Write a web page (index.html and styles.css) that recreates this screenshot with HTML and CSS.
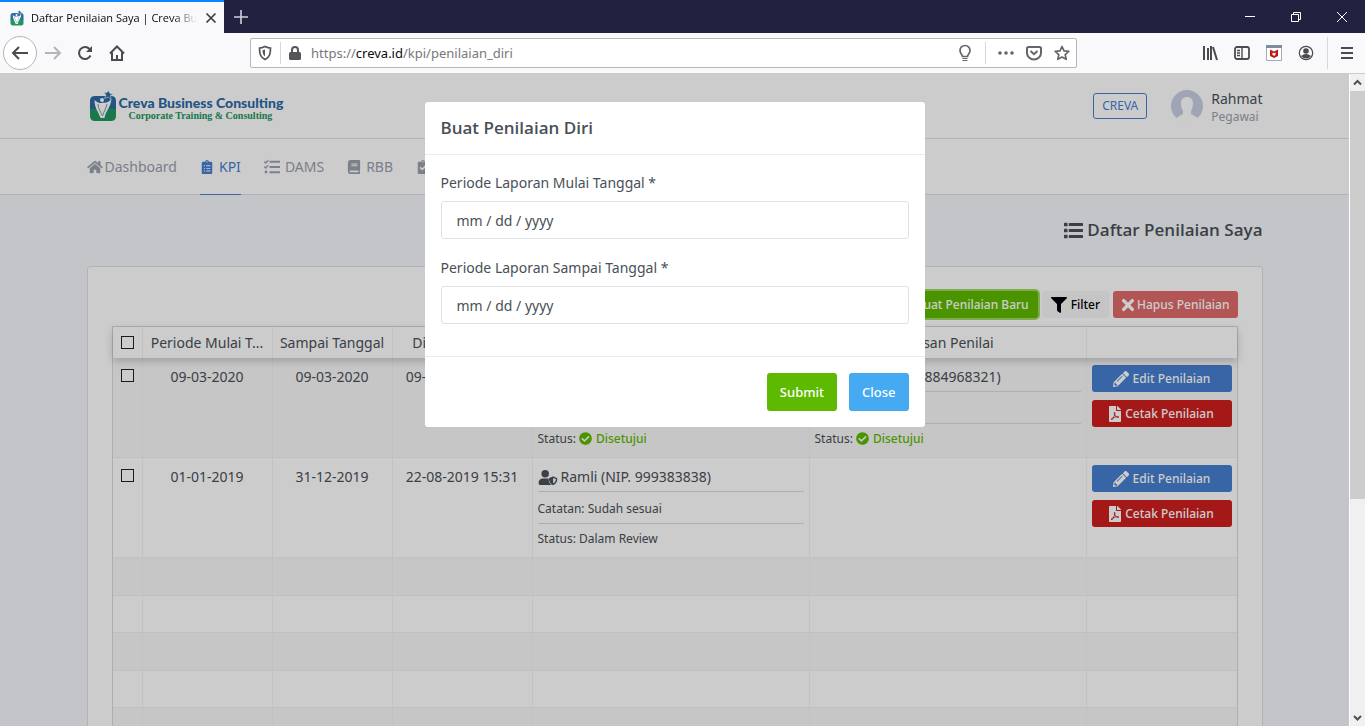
FILE: index.html
```html
<!DOCTYPE html>
<html lang="id">
<head>
<meta charset="utf-8">
<title>Daftar Penilaian Saya | Creva Business Consulting</title>
<link rel="stylesheet" href="styles.css">
</head>
<body>
<svg class="sprite" aria-hidden="true">
  <symbol id="home" viewBox="0 0 576 512"><path d="M280.37 148.26L96 300.11V464a16 16 0 0 0 16 16l112.06-.29a16 16 0 0 0 15.92-16V368a16 16 0 0 1 16-16h64a16 16 0 0 1 16 16v95.64a16 16 0 0 0 16 16.05L464 480a16 16 0 0 0 16-16V300L295.67 148.26a12.19 12.19 0 0 0-15.3 0zM571.6 251.47L488 182.56V44.05a12 12 0 0 0-12-12h-56a12 12 0 0 0-12 12v72.61L318.47 43a48 48 0 0 0-61 0L4.34 251.47a12 12 0 0 0-1.6 16.9l25.5 31A12 12 0 0 0 45.15 301l235.22-193.74a12.19 12.19 0 0 1 15.3 0L530.9 301a12 12 0 0 0 16.9-1.6l25.5-31a12 12 0 0 0-1.7-16.93z"/></symbol>
  <symbol id="clipboard-list" viewBox="0 0 384 512"><path d="M336 64h-80c0-35.3-28.7-64-64-64s-64 28.7-64 64H48C21.5 64 0 85.5 0 112v352c0 26.5 21.5 48 48 48h288c26.5 0 48-21.5 48-48V112c0-26.5-21.5-48-48-48zM96 424c-13.3 0-24-10.7-24-24s10.7-24 24-24 24 10.7 24 24-10.7 24-24 24zm0-96c-13.3 0-24-10.7-24-24s10.7-24 24-24 24 10.7 24 24-10.7 24-24 24zm0-96c-13.3 0-24-10.7-24-24s10.7-24 24-24 24 10.7 24 24-10.7 24-24 24zm96-192c13.3 0 24 10.7 24 24s-10.7 24-24 24-24-10.7-24-24 10.7-24 24-24zm128 368c0 4.4-3.6 8-8 8H168c-4.4 0-8-3.6-8-8v-16c0-4.4 3.6-8 8-8h144c4.4 0 8 3.6 8 8v16zm0-96c0 4.4-3.6 8-8 8H168c-4.4 0-8-3.6-8-8v-16c0-4.4 3.6-8 8-8h144c4.4 0 8 3.6 8 8v16zm0-96c0 4.4-3.6 8-8 8H168c-4.4 0-8-3.6-8-8v-16c0-4.4 3.6-8 8-8h144c4.4 0 8 3.6 8 8v16z"/></symbol>
  <symbol id="clipboard-check" viewBox="0 0 384 512"><path fill-rule="evenodd" d="M336 64h-80c0-35.3-28.7-64-64-64s-64 28.7-64 64H48C21.5 64 0 85.5 0 112v352c0 26.5 21.5 48 48 48h288c26.5 0 48-21.5 48-48V112c0-26.5-21.5-48-48-48zM192 40a24 24 0 1 1 0 48 24 24 0 0 1 0-48zM64 288l44-44 56 56 116-116 44 44-160 160z"/></symbol>
  <symbol id="tasks" viewBox="0 0 512 512"><path d="M8 82l46 46 86-92M8 242l46 46 86-92" fill="none" stroke="currentColor" stroke-width="42"/><circle cx="64" cy="416" r="46"/><path d="M192 52h304q16 0 16 16v32q0 16-16 16H192q-16 0-16-16V68q0-16 16-16zM192 224h304q16 0 16 16v32q0 16-16 16H192q-16 0-16-16v-32q0-16 16-16zM192 388h304q16 0 16 16v32q0 16-16 16H192q-16 0-16-16v-32q0-16 16-16z"/></symbol>
  <symbol id="book" viewBox="0 0 448 512"><path d="M448 360V24c0-13.3-10.7-24-24-24H96C43 0 0 43 0 96v320c0 53 43 96 96 96h328c13.3 0 24-10.7 24-24v-16c0-7.5-3.5-14.3-8.9-18.7-4.2-15.4-4.2-59.3 0-74.7 5.4-4.3 8.9-11.1 8.9-18.6zM128 134c0-3.3 2.7-6 6-6h212c3.3 0 6 2.7 6 6v20c0 3.3-2.7 6-6 6H134c-3.3 0-6-2.7-6-6v-20zm0 64c0-3.3 2.7-6 6-6h212c3.3 0 6 2.7 6 6v20c0 3.3-2.7 6-6 6H134c-3.3 0-6-2.7-6-6v-20zm253.4 250H96c-17.7 0-32-14.3-32-32 0-17.6 14.4-32 32-32h285.4c-1.9 17.1-1.9 46.9 0 64z"/></symbol>
  <symbol id="list" viewBox="0 0 512 512"><path d="M16 48h64q16 0 16 16v64q0 16-16 16H16q-16 0-16-16V64q0-16 16-16zM16 208h64q16 0 16 16v64q0 16-16 16H16q-16 0-16-16v-64q0-16 16-16zM16 368h64q16 0 16 16v64q0 16-16 16H16q-16 0-16-16v-64q0-16 16-16zM144 56h352q16 0 16 16v48q0 16-16 16H144q-16 0-16-16V72q0-16 16-16zM144 216h352q16 0 16 16v48q0 16-16 16H144q-16 0-16-16v-48q0-16 16-16zM144 376h352q16 0 16 16v48q0 16-16 16H144q-16 0-16-16v-48q0-16 16-16z"/></symbol>
  <symbol id="filter" viewBox="0 0 512 512"><path d="M487.976 0H24.028C2.71 0-8.047 25.866 7.058 40.971L192 225.941V432c0 7.831 3.821 15.17 10.237 19.662l80 55.98C298.02 518.69 320 507.493 320 487.98V225.941l184.947-184.97C520.021 25.896 509.338 0 487.976 0z"/></symbol>
  <symbol id="times" viewBox="0 0 16 16"><path d="M3 3l10 10M13 3L3 13" fill="none" stroke="currentColor" stroke-width="4" stroke-linecap="round"/></symbol>
  <symbol id="pencil" viewBox="0 0 512 512"><path d="M497.9 142.1l-46.1 46.1c-4.7 4.7-12.3 4.7-17 0l-111-111c-4.7-4.7-4.7-12.3 0-17l46.1-46.1c18.7-18.7 49.1-18.7 67.9 0l60.1 60.1c18.8 18.7 18.8 49.1 0 67.9zM284.2 99.8L21.6 362.4.4 483.9c-2.9 16.4 11.4 30.6 27.8 27.8l121.5-21.3 262.6-262.6c4.7-4.7 4.7-12.3 0-17l-111-111c-4.8-4.7-12.4-4.7-17.1 0zM124.1 339.9c-5.5-5.5-5.5-14.3 0-19.8l154-154c5.5-5.5 14.3-5.5 19.8 0s5.5 14.3 0 19.8l-154 154c-5.5 5.5-14.3 5.5-19.8 0zM88 424h48v36.3l-64.5 11.3-31.1-31.1L51.7 376H88v48z"/></symbol>
  <symbol id="pdf" viewBox="0 0 384 512"><path d="M181.9 256.1c-5-16-4.9-46.9-2-46.9 8.4 0 7.6 36.9 2 46.9zm-1.7 47.2c-7.7 20.2-17.3 43.3-28.4 62.7 18.3-7 39-17.2 62.9-21.9-12.7-9.6-24.9-23.4-34.5-40.8zM86.1 428.1c0 .8 13.2-5.4 34.9-40.2-6.7 6.3-29.1 24.5-34.9 40.2zM248 160h136v328c0 13.3-10.7 24-24 24H24c-13.3 0-24-10.7-24-24V24C0 10.7 10.7 0 24 0h200v136c0 13.2 10.8 24 24 24zm-8 171.8c-20-12.2-33.3-29-42.7-53.8 4.5-18.5 11.6-46.6 6.2-64.2-4.7-29.4-42.4-26.5-47.8-6.8-5 18.3-.4 44.1 8.1 77-11.6 27.6-28.7 64.6-40.8 85.8-.1 0-.1.1-.2.1-27.1 13.9-73.6 44.5-54.5 68 5.6 6.9 16 10 21.5 10 17.9 0 35.7-18 61.1-61.8 25.8-8.5 54.1-19.1 79-23.2 21.7 11.8 47.1 19.5 64 19.5 29.2 0 31.2-32 19.7-43.4-13.9-13.6-54.3-9.7-73.6-7.2zM377 105L279 7c-4.5-4.5-10.6-7-17-7h-6v128h128v-6.1c0-6.3-2.5-12.4-7-16.9zm-74.1 255.3c4.1-2.7-2.5-11.9-42.8-9 37.1 15.8 42.8 9 42.8 9z"/></symbol>
  <symbol id="check-circle" viewBox="0 0 512 512"><path d="M504 256c0 136.967-111.033 248-248 248S8 392.967 8 256 119.033 8 256 8s248 111.033 248 248zM227.314 387.314l184-184c6.248-6.248 6.248-16.379 0-22.627l-22.627-22.627c-6.248-6.248-16.379-6.249-22.628 0L216 308.118l-70.059-70.059c-6.248-6.248-16.379-6.248-22.628 0l-22.627 22.627c-6.248 6.248-6.248 16.379 0 22.627l104 104c6.249 6.249 16.379 6.249 22.628.001z"/></symbol>
  <symbol id="user-shield" viewBox="0 0 640 512"><circle cx="224" cy="128" r="128"/><path d="M134 288h180c10 0 24 3 36 7-6 12-8 20-8 32 0 75 30 143 95 184H48c-26 0-48-22-48-48v-41c0-74 60-134 134-134z"/><path fill-rule="evenodd" d="M622 271l-116-45a33 33 0 0 0-24 0l-115 45c-9 4-15 13-15 24 0 112 68 189 130 215 8 3 17 3 25 0 49-21 130-90 130-215 0-11-6-20-15-24zM496 462V273l96 38c-5 82-51 130-96 151z"/></symbol>
  <symbol id="logo" viewBox="0 0 28 32"><path d="M6 6h16q5 0 5 5v9H1v-9q0-5 5-5z" fill="#2b6ba6"/><path d="M1 19h26v7q0 5-5 5H6q-5 0-5-5z" fill="#219660"/><path d="M14 12.500c-4 1.500-6.500-.5-8.500-2.500 0 8 3.500 11 6 18h4c1-7 6-10 7-19-2.500 2.500-5 4.500-8.500 3.500z" fill="#fff"/><path d="M9 14c0 5 3 8 4.500 12M18 14c-1 5-3 7-4.500 12" fill="none" stroke="#65a0a2" stroke-width="1"/><circle cx="13" cy="10" r="2" fill="#fff"/><path d="M19.500.5l1.500 3 3.500.5-3 1.500.5 4-2.800-2.500-3.700 1.500 1.500-3.500-2-2.500h3z" fill="#2b6ba6" stroke="#fff" stroke-width=".6"/></symbol>
</svg>

<header class="browser">
  <div class="tabs">
    <div class="tab">
      <svg class="favicon"><use href="#logo"/></svg>
      <span class="tab-title">Daftar Penilaian Saya | Creva Bu</span>
      <button class="plain" aria-label="Tutup tab"><svg width="14" height="14" viewBox="0 0 14 14"><path d="M2.500 2.500l9 9M11.500 2.500l-9 9" stroke="#3b3b42" stroke-width="1.700"/></svg></button>
    </div>
    <button class="plain new-tab" aria-label="Tab baru"><svg width="16" height="16" viewBox="0 0 16 16"><path d="M8 1v14M1 8h14" stroke="#d0d1da" stroke-width="1.600"/></svg></button>
    <div class="window-buttons">
      <button class="plain" aria-label="Minimalkan"><svg width="12" height="12" viewBox="0 0 12 12"><path d="M1 5.500h10" stroke="#fff"/></svg></button>
      <button class="plain" aria-label="Pulihkan"><svg width="12" height="12" viewBox="0 0 12 12" fill="none" stroke="#fff"><path d="M1.500 3.500h7v7h-7zM3.500 3.500v-2h7v7h-2" fill="none"/></svg></button>
      <button class="plain" aria-label="Tutup"><svg width="12" height="12" viewBox="0 0 12 12"><path d="M1 1l10 10M11 1L1 11" stroke="#fff"/></svg></button>
    </div>
  </div>
  <div class="toolbar">
    <div class="navigation">
      <button class="plain back" aria-label="Kembali"><svg width="18" height="18" viewBox="0 0 18 18"><path d="M17 9H2M8 3L2 9l6 6" fill="none" stroke="#4a4a4f" stroke-width="2"/></svg></button>
      <button class="plain" aria-label="Maju"><svg width="18" height="18" viewBox="0 0 18 18"><path d="M1 9h15M10 3l6 6-6 6" fill="none" stroke="#b5b5b9" stroke-width="2"/></svg></button>
      <button class="plain" aria-label="Muat ulang"><svg width="16" height="16" viewBox="0 0 16 16"><path d="M13.500 10.500A6 6 0 1 1 12.500 4" fill="none" stroke="#4a4a4f" stroke-width="2"/><path d="M15 1v6H9z" fill="#4a4a4f"/></svg></button>
      <button class="plain" aria-label="Beranda"><svg width="16" height="16" viewBox="0 0 16 16"><path d="M1 8.500L8 1.500l7 7M3 7.500V15h10V7.500" fill="none" stroke="#4a4a4f" stroke-width="2"/><path d="M7 10h2v4H7z" fill="#4a4a4f"/></svg></button>
    </div>
    <div class="address">
      <svg width="16" height="16" viewBox="0 0 16 16"><path d="M8 1.500c2 1 4 1.500 5.500 1.500 0 5-.5 9-5.500 11.500C3 12 2.500 8 2.500 3 4 3 6 2.500 8 1.500z" fill="none" stroke="#55555a" stroke-width="1.700"/><path d="M8 4.500v7C6 10 5.500 8 5.500 5.300z" fill="#55555a"/></svg>
      <span class="rule"></span>
      <svg width="14" height="16" viewBox="0 0 14 16"><rect x="1" y="7" width="12" height="8" rx="1.500" fill="#55555a"/><path d="M4 8V5a3 3 0 0 1 6 0v3" fill="none" stroke="#55555a" stroke-width="2"/></svg>
      <span class="url">https://<b>creva.id</b>/kpi/penilaian_diri</span>
      <svg width="16" height="18" viewBox="0 0 16 18"><path d="M5.500 12.500c0-2-2.500-3-2.500-6a5 5 0 0 1 10 0c0 3-2.500 4-2.500 6z" fill="none" stroke="#66666a" stroke-width="1.700"/><path d="M5.500 14h5v1h-5zM5.500 16h5v1h-5z" fill="#66666a"/></svg>
      <span class="rule wide"></span>
      <svg width="16" height="16" viewBox="0 0 16 16" fill="#66666a"><circle cx="2" cy="8" r="1.800" fill="#66666a"/><circle cx="8" cy="8" r="1.800" fill="#66666a"/><circle cx="14" cy="8" r="1.800" fill="#66666a"/></svg>
      <svg width="16" height="16" viewBox="0 0 16 16"><path d="M2.500 2h11q1.500 0 1.500 1.500V8A7 6.500 0 0 1 1 8V3.500Q1 2 2.500 2z" fill="none" stroke="#66666a" stroke-width="2"/><path d="M4.500 6L8 9.200 11.500 6" fill="none" stroke="#66666a" stroke-width="2"/></svg>
      <svg width="16" height="16" viewBox="0 0 16 16"><path d="M8 1.500l2 4.400 4.800.5-3.600 3.200 1 4.700L8 12l-4.200 2.300 1-4.700L1.200 6.400 6 5.900z" fill="none" stroke="#66666a" stroke-width="1.700" stroke-linejoin="round"/></svg>
    </div>
    <div class="tools">
      <svg width="16" height="16" viewBox="0 0 16 16" stroke="#4a4a4f" stroke-width="2"><path d="M2 1v14M6 3v12M9 1v14M11 2l4 13"/></svg>
      <svg width="16" height="16" viewBox="0 0 16 16"><rect x="1" y="2" width="14" height="12" rx="2" fill="none" stroke="#4a4a4f" stroke-width="1.800"/><path d="M8 2v12M3 5.500h3M3 8h3M3 10.500h3" stroke="#4a4a4f" stroke-width="1.400"/></svg>
      <svg width="16" height="16" viewBox="0 0 16 16"><path d="M.5.500h15v15H.5z" fill="#fff" stroke="#a5abb2"/><path d="M0 0h16v3H0z" fill="#78909c"/><path d="M4 4.500l4 2 4-2V11l-4 2-4-2z" fill="#c01818"/><path d="M6.500 7.500V10l1.500.8 1.500-.8V7.500L8 8.300z" fill="#fff"/></svg>
      <svg width="16" height="16" viewBox="0 0 16 16"><circle cx="8" cy="8" r="6.700" fill="none" stroke="#4a4a4f" stroke-width="1.200"/><circle cx="8" cy="6" r="2.800" fill="#4a4a4f"/><path d="M3 11q5-4 10 0-5 5-10 0z" fill="#4a4a4f"/></svg>
      <span class="rule long"></span>
      <svg width="12" height="14" viewBox="0 0 12 14" stroke="#4a4a4f" stroke-width="2"><path d="M0 2h12M0 7h12M0 12h12"/></svg>
    </div>
  </div>
</header>

<div class="viewport">
  <main class="page">
    <div class="topbar"><div class="container topbar-row">
      <a class="brand" href="#"><svg width="28" height="32"><use href="#logo"/></svg><span class="brand-text"><strong>Creva Business Consulting</strong><small>Corporate Training &amp; Consulting</small></span></a>
      <div class="account"><a class="tenant" href="#">CREVA</a>
        <svg class="avatar" viewBox="0 0 32 32"><circle cx="16" cy="16" r="16" fill="#c8cfe3"/><path d="M10 13c0-8 12-8 12 0 0 4-1 6-2 8v3l7 4a16 16 0 0 1-22 0l7-4v-3c-1-2-2-4-2-8z" fill="#fff"/></svg>
        <div class="user"><span>Rahmat</span><small>Pegawai</small></div></div>
    </div></div>
    <nav class="menu"><div class="container menu-row">
      <a href="#"><svg class="i18"><use href="#home"/></svg>Dashboard</a>
      <a class="active" href="#"><svg class="i14"><use href="#clipboard-list"/></svg>KPI</a>
      <a href="#"><svg class="i16"><use href="#tasks"/></svg>DAMS</a>
      <a href="#"><svg class="i14"><use href="#book"/></svg>RBB</a>
      <a href="#" aria-label="Persetujuan"><svg class="i14"><use href="#clipboard-check"/></svg></a>
    </div></nav>
    <div class="container">
      <h1 class="page-title"><svg class="list-icon"><use href="#list"/></svg>Daftar Penilaian Saya</h1>
      <section class="card">
        <div class="actions">
          <button class="btn green focused">Buat Penilaian Baru</button>
          <button class="btn light"><svg class="i16"><use href="#filter"/></svg>Filter</button>
          <button class="btn rose"><svg class="i14"><use href="#times"/></svg>Hapus Penilaian</button>
        </div>
        <table class="grid">
          <colgroup><col class="c-check"><col class="c-start"><col class="c-end"><col class="c-made"><col><col><col class="c-act"></colgroup>
          <thead><tr><th><input type="checkbox" aria-label="Pilih semua"></th><th>Periode Mulai T...</th><th>Sampai Tanggal</th><th>Dibuat Tanggal</th><th></th><th>Atasan Penilai</th><th></th></tr></thead>
          <tbody>
            <tr class="tall"><td><input type="checkbox" aria-label="Pilih baris 1"></td><td class="mid">09-03-2020</td><td class="mid">09-03-2020</td><td class="mid">09-03-2020 10:12</td>
              <td><div class="review"><p class="who"></p><p class="note"></p><p>Status: <span class="ok"><svg class="i13"><use href="#check-circle"/></svg>Disetujui</span></p></div></td>
              <td><div class="review"><p class="who"><svg class="i19"><use href="#user-shield"/></svg>Ramlan (NIP. 884968321)</p><p class="note"></p><p>Status: <span class="ok"><svg class="i13"><use href="#check-circle"/></svg>Disetujui</span></p></div></td>
              <td><div class="row-actions"><button class="btn blue"><svg class="i16"><use href="#pencil"/></svg>Edit Penilaian</button><button class="btn red"><svg class="i16 narrow"><use href="#pdf"/></svg>Cetak Penilaian</button></div></td></tr>
            <tr class="tall"><td><input type="checkbox" aria-label="Pilih baris 2"></td><td class="mid">01-01-2019</td><td class="mid">31-12-2019</td><td class="mid">22-08-2019 15:31</td>
              <td><div class="review"><p class="who"><svg class="i19"><use href="#user-shield"/></svg>Ramli (NIP. 999383838)</p><p class="note">Catatan: Sudah sesuai</p><p>Status: Dalam Review</p></div></td>
              <td></td>
              <td><div class="row-actions"><button class="btn blue"><svg class="i16"><use href="#pencil"/></svg>Edit Penilaian</button><button class="btn red"><svg class="i16 narrow"><use href="#pdf"/></svg>Cetak Penilaian</button></div></td></tr>
            <tr><td></td><td></td><td></td><td></td><td></td><td></td><td></td></tr>
            <tr><td></td><td></td><td></td><td></td><td></td><td></td><td></td></tr>
            <tr><td></td><td></td><td></td><td></td><td></td><td></td><td></td></tr>
            <tr><td></td><td></td><td></td><td></td><td></td><td></td><td></td></tr>
            <tr><td></td><td></td><td></td><td></td><td></td><td></td><td></td></tr>
          </tbody>
        </table>
      </section>
    </div>
    <div class="backdrop">
      <form class="modal" role="dialog" aria-labelledby="dialog-title">
        <h2 id="dialog-title">Buat Penilaian Diri</h2>
        <div class="fields">
          <label for="from">Periode Laporan Mulai Tanggal *</label>
          <input id="from" type="text" value="mm / dd / yyyy">
          <label for="to">Periode Laporan Sampai Tanggal *</label>
          <input id="to" type="text" value="mm / dd / yyyy">
        </div>
        <footer><button type="button" class="btn big submit">Submit</button><button type="button" class="btn big close">Close</button></footer>
      </form>
    </div>
  </main>
  <div class="scrollbar">
    <svg width="15" height="17" viewBox="0 0 15 17"><path d="M4 10.500L7.500 7l3.500 3.500" fill="none" stroke="#505050" stroke-width="2"/></svg>
    <div class="thumb"></div>
    <svg width="15" height="17" viewBox="0 0 15 17"><path d="M4 7l3.500 3.500L11 7" fill="none" stroke="#505050" stroke-width="2"/></svg>
  </div>
</div>
</body>
</html>
```

FILE: styles.css
```css
* { box-sizing: border-box; }
body {
  margin: 0;
  height: 100vh;
  display: flex;
  flex-direction: column;
  overflow: hidden;
  font: 14px/24px "Noto Sans", "Open Sans", sans-serif;
  color: #495057;
}
.sprite { position: absolute; width: 0; height: 0; }
svg { flex: none; fill: currentColor; }
button, input { font: inherit; }
a { color: inherit; text-decoration: none; }
p, h1, h2 { margin: 0; }
.plain { display: grid; place-items: center; padding: 0; border: 0; background: none; }

/* Browser window */
.tabs { display: flex; height: 33px; background: #20223f; }
.tab { width: 224px; display: flex; align-items: center; gap: 7px; padding: 0 10px; background: #f9f9fb; border-top: 2px solid #0a84ff; }
.favicon { width: 14px; height: 16px; }
.tab-title { flex: 1; white-space: nowrap; font: 11px/18px "Open Sans", sans-serif; color: #0c0c0d; -webkit-mask-image: linear-gradient(90deg, #000 86%, transparent); mask-image: linear-gradient(90deg, #000 86%, transparent); }
.new-tab { width: 34px; }
.window-buttons { display: flex; margin-left: auto; }
.window-buttons .plain { width: 46px; }
.toolbar { display: flex; align-items: center; height: 41px; background: #f9f9fb; border-bottom: 1px solid #ccc; }
.navigation { display: flex; width: 250px; padding-left: 3px; }
.navigation .plain { width: 32px; height: 34px; }
.navigation .back { width: 34px; border: 1px solid #b5b5b9; border-radius: 50%; background: #fff; }
.address { flex: 1; height: 30px; display: flex; align-items: center; gap: 7px; padding: 0 6px; background: #fff; border: 1px solid #b8b8bc; border-radius: 2px; }
.address svg:nth-last-child(-n+2) { margin-left: 5px; }
.url { flex: 1; padding-left: 2px; font-size: 13px; color: #77777b; }
.url b { font-weight: 400; color: #0c0c0d; }
.rule { width: 1px; height: 22px; background: #d7d7db; }
.wide { margin: 0 5px; }
.long { height: 32px; margin: 0 -3px; }
.tools { width: 288px; display: flex; align-items: center; justify-content: flex-end; gap: 16px; padding-right: 12px; }

/* Page */
.viewport { flex: 1; min-height: 0; display: flex; }
.page { position: relative; flex: 1; min-width: 0; overflow: hidden; background: #f5f7fb; }
.container { max-width: 1200px; margin: 0 auto; padding: 0 12px; }
.topbar, .menu { background: #fff; border-bottom: 1px solid #dde0e6; }
.topbar-row { display: flex; align-items: center; justify-content: space-between; height: 64px; }
.brand { display: flex; align-items: center; gap: 2px; padding-left: 2px; }
.brand-text { display: flex; flex-direction: column; padding-top: 3px; }
.brand strong { font: 900 14px/16px Lato, sans-serif; color: #2b6ba6; }
.brand small { padding-left: 10px; font: 700 10px/10px "Liberation Serif", serif; color: #219660; }
.account { display: flex; align-items: center; }
.tenant { padding: 0 8px; border: 1px solid #467fcf; border-radius: 3px; font-size: 12px; color: #467fcf; }
.avatar { width: 32px; height: 32px; margin: 0 8px 0 24px; }
.user { display: flex; flex-direction: column; padding-top: 3px; line-height: 18px; }
.user small { font-size: 12px; color: #9aa0ac; }
.menu-row { display: flex; gap: 23px; height: 55px; }
.menu a { display: flex; align-items: center; gap: 2px; height: 56px; color: #9aa0ac; border-bottom: 1px solid transparent; }
.menu a + a { gap: 5px; }
.menu .active { color: #467fcf; border-color: #467fcf; }
.i13 { width: 13px; height: 13px; }
.i14 { width: 14px; height: 14px; }
.i16 { width: 16px; height: 16px; }
.i18 { width: 16px; height: 14px; }
.i19 { width: 20px; height: 15px; }
.narrow { width: 12px; }
.page-title { display: flex; align-items: center; justify-content: flex-end; gap: 4px; padding: 23px 0 24px; font: 600 17px/24px "Open Sans", sans-serif; }
.list-icon { width: 19px; height: 19px; }
.card { padding: 24px; background: #fff; border: 1px solid #dde0e6; border-radius: 3px; }
.actions { display: flex; justify-content: flex-end; gap: 4px; margin-bottom: 8px; }
.btn { display: inline-flex; align-items: center; justify-content: center; gap: 4px; height: 27px; padding: 0 8px; border: 0; border-radius: 3px; color: #fff; font: 500 12px/18px "Noto Sans", sans-serif; }
.actions .btn { padding: 0 9px; }
.green { background: #5eba00; }
.focused { box-shadow: 0 0 0 2px #9fd866; }
.light { background: #f7f7f8; color: #000; }
.rose { background: #e06b6b; }
.actions .rose { gap: 2px; padding: 0 8px; }
.blue { background: #467fcf; }
.red { background: #cd201f; }
.btn.big { height: 38px; padding: 0 13px; font-size: 13px; }
.submit { background: #5eba00; }
.close { background: #45aaf2; }

.grid { width: 100%; table-layout: fixed; border-collapse: separate; border-spacing: 0; border: 1px solid #d8dadd; }
.c-check { width: 30px; }
.c-start { width: 130px; }
.c-end { width: 120px; }
.c-made { width: 140px; }
.c-act { width: 150px; }
th, td { padding: 0 5px; border-right: 1px solid #f3f3f3; vertical-align: top; text-align: left; }
th { height: 31px; padding: 0; font-weight: 400; line-height: 31px; white-space: nowrap; text-align: center; }
thead { box-shadow: 0 3px 8px rgba(0, 0, 0, .2); position: relative; }
td { height: 38px; border-bottom: 1px solid #f0f0f0; }
tr:nth-child(even) td { height: 37px; }
th:last-child, td:last-child { border-right: 0; }
tbody tr:nth-child(odd) td { background: #f8f8f8; }
.grid .tall td { height: 100px; padding-top: 7px; }
.mid { text-align: center; }
.grid input { appearance: none; width: 13px; height: 13px; margin: 0 3px; border: 1px solid #222; background: #fff; }
th input { vertical-align: -1px; }
.review { font-size: 12px; }
.review p { padding: 3px 0; border-bottom: 1px solid #d8dbe2; }
.review .who { display: flex; align-items: center; gap: 3px; height: 27px; padding: 0 0 2px; font-size: 14px; }
.review .note { height: 32px; padding-top: 5px; }
.review p:last-child { border: 0; }
.ok { color: #5eba00; font-weight: 500; }
.ok svg { margin-right: 4px; vertical-align: -2px; }
.row-actions { display: flex; flex-direction: column; gap: 8px; }

/* Dialog */
.backdrop { position: absolute; inset: 0; display: flex; justify-content: center; align-items: flex-start; padding-top: 28px; background: rgba(0, 0, 0, .2); }
.modal { width: 500px; background: #fff; border-radius: 3px; }
.modal h2 { padding: 14px 16px; border-bottom: 1px solid #e9ecef; font: 600 17px/24px "Open Sans", sans-serif; }
.fields { display: flex; flex-direction: column; padding: 16px 16px 32px; }
.fields label { margin-bottom: 6px; }
.fields input { height: 38px; padding: 0 15px; border: 1px solid #dfe1e6; border-radius: 3px; color: #495057; }
.fields input + label { margin-top: 17px; }
.modal footer { display: flex; justify-content: flex-end; gap: 12px; padding: 16px; border-top: 1px solid #e9ecef; }

.scrollbar { width: 16px; display: flex; flex-direction: column; background: #f0f0f0; border-left: 1px solid #fff; }
.thumb { height: 408px; margin-bottom: auto; background: #cdcdcd; }
```
